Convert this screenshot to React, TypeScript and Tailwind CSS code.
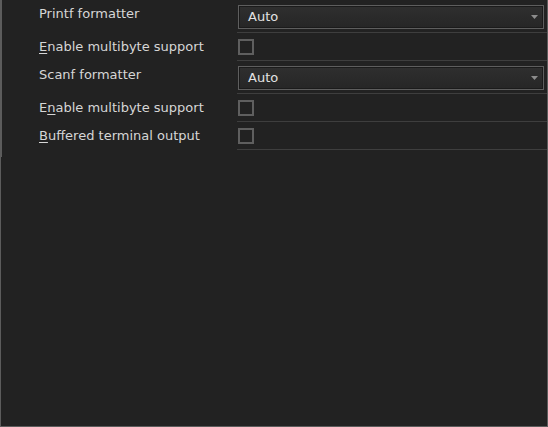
import React from 'react';

type Row =
  | { kind: 'select'; label: React.ReactNode; value: string }
  | { kind: 'check'; label: React.ReactNode };

// underline the access key letter, like a Windows dialog
const Key = ({ children }: { children: React.ReactNode }) => (
  <span className="underline underline-offset-2 decoration-1">{children}</span>
);

const rows: Row[] = [
  { kind: 'select', label: 'Printf formatter', value: 'Auto' },
  {
    kind: 'check',
    label: (
      <>
        <Key>E</Key>nable multibyte support
      </>
    ),
  },
  { kind: 'select', label: 'Scanf formatter', value: 'Auto' },
  {
    kind: 'check',
    label: (
      <>
        E<Key>n</Key>able multibyte support
      </>
    ),
  },
  {
    kind: 'check',
    label: (
      <>
        <Key>B</Key>uffered terminal output
      </>
    ),
  },
];

function Select({ value }: { value: string }) {
  return (
    <div className="flex h-[24px] w-[306px] items-center justify-between border border-[#5e5e5e] bg-gradient-to-b from-[#2f2f2f] to-[#262626] pl-[9px] pr-[4px] shadow-[inset_0_0_0_1px_#1b1b1b]">
      <span className="text-[#e2e2e2]">{value}</span>
      <svg width="7" height="4" viewBox="0 0 7 4" className="mr-[1px]">
        <path d="M0 0H7L3.5 4Z" fill="#8c8c8c" />
      </svg>
    </div>
  );
}

function Checkbox() {
  return <div className="h-[16px] w-[16px] border-2 border-[#5f5f5f] bg-[#222]" />;
}

export default function App() {
  return (
    <div
      className="h-[427px] w-[548px] overflow-hidden border-x border-b border-[#5c5c5c] bg-[#222222] text-[13px] text-[#d6d6d6]"
      style={{ fontFamily: '"DejaVu Sans", sans-serif' }}
    >
      <div className="flex h-[157px] flex-col border-l border-[#5c5c5c]">
        {rows.map((row, i) => (
          <div key={i} className={`flex ${row.kind === 'select' ? 'h-[33px]' : 'h-[28px]'}`}>
            <div className="w-[235px] pl-[37px] pt-[5px] leading-[18px]">{row.label}</div>
            <div
              className={`flex-1 border-b border-[#3e3e3e] pl-[1px] ${
                row.kind === 'select' ? 'pt-[5px]' : 'pt-[6px]'
              }`}
            >
              {row.kind === 'select' ? <Select value={row.value} /> : <Checkbox />}
            </div>
          </div>
        ))}
      </div>
    </div>
  );
}
